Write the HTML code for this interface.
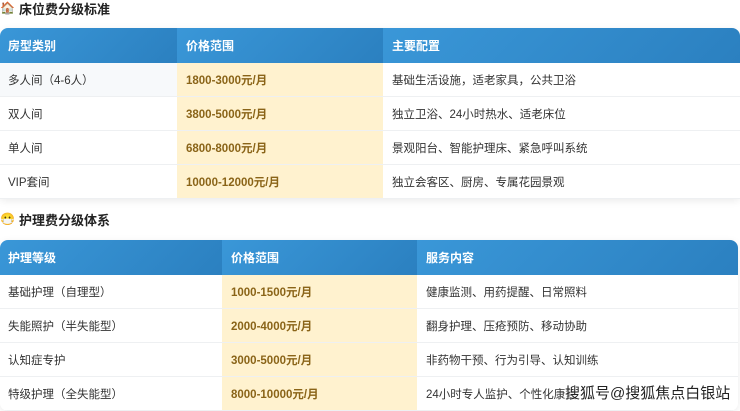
<!DOCTYPE html><html><head><meta charset="utf-8"><style>
body{margin:0;width:740px;height:410px;overflow:hidden;background:#fff;font-family:"Liberation Sans","Noto Sans CJK SC",sans-serif;position:relative;}
h3{position:absolute;left:0;margin:0;font-size:13px;font-weight:bold;color:#222;display:flex;align-items:center;gap:4px;}
table{position:absolute;left:0;border-collapse:collapse;font-size:11.5px;color:#333;box-shadow:0 2px 8px rgba(0,0,0,.08);border-radius:8px;overflow:hidden;}
th{background:linear-gradient(135deg,#3a97d8,#2b80c0);color:#fff;text-align:left;font-weight:bold;padding:0 0 0 8px;height:35px;font-size:12px;}
th+th{padding-left:9px}
td{height:33px;padding:0 0 0 8px;border-bottom:1px solid #eef0f2;}
td.p{background:#fff2cf;color:#8a6418;font-weight:bold;padding-left:9px}
td.c{padding-left:9px}
tr.s td:first-child{background:#f7f9fb}
.wm{position:absolute;left:565px;top:382px;font-size:15px;white-space:nowrap;color:#222;text-shadow:0 0 2px #fff,0 0 2px #fff;}
</style></head><body>
<h3 style="top:0;height:16px"><span style="font-size:12px">🏠</span>床位费分级标准</h3>
<table style="top:28px;width:740px;border-radius:8px 8px 0 0">
<tr><th style="width:169px">房型类别</th><th style="width:197px">价格范围</th><th>主要配置</th></tr>
<tr class="s"><td>多人间（4-6人）</td><td class="p">1800-3000元/月</td><td class="c">基础生活设施，适老家具，公共卫浴</td></tr>
<tr><td>双人间</td><td class="p">3800-5000元/月</td><td class="c">独立卫浴、24小时热水、适老床位</td></tr>
<tr><td>单人间</td><td class="p">6800-8000元/月</td><td class="c">景观阳台、智能护理床、紧急呼叫系统</td></tr>
<tr><td>VIP套间</td><td class="p">10000-12000元/月</td><td class="c">独立会客区、厨房、专属花园景观</td></tr>
</table>
<h3 style="top:211px;height:16px"><span style="font-size:12px">😷</span>护理费分级体系</h3>
<table style="top:240px;width:738px">
<tr><th style="width:214px">护理等级</th><th style="width:186px">价格范围</th><th>服务内容</th></tr>
<tr><td>基础护理（自理型）</td><td class="p">1000-1500元/月</td><td class="c">健康监测、用药提醒、日常照料</td></tr>
<tr><td>失能照护（半失能型）</td><td class="p">2000-4000元/月</td><td class="c">翻身护理、压疮预防、移动协助</td></tr>
<tr><td>认知症专护</td><td class="p">3000-5000元/月</td><td class="c">非药物干预、行为引导、认知训练</td></tr>
<tr><td>特级护理（全失能型）</td><td class="p">8000-10000元/月</td><td class="c">24小时专人监护、个性化康复</td></tr>
</table>
<div class="wm">搜狐号@搜狐焦点白银站</div>
</body></html>
